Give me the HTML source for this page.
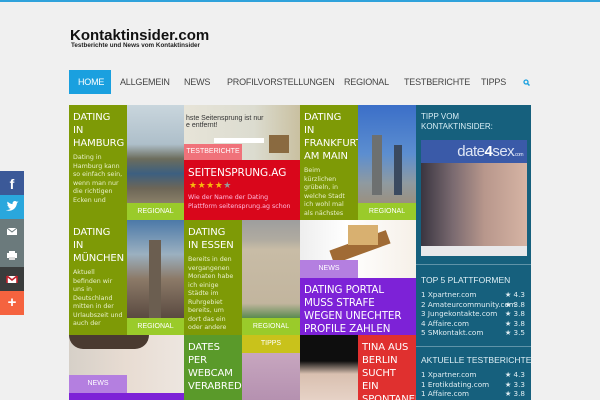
<!DOCTYPE html>
<html><head><meta charset="utf-8"><style>
*{margin:0;padding:0;box-sizing:border-box}
body{width:600px;height:400px;overflow:hidden;background:#f0f0f0;font-family:"DejaVu Sans","Liberation Sans",sans-serif;position:relative}
.a{position:absolute;overflow:hidden}
.t{color:#fff;font-size:10px;line-height:13px;padding:6px 4px 0 4px;letter-spacing:-.1px}
.d{color:#e8f0c8;font-size:6.3px;line-height:8.5px;padding:4px 4px 0 4px}
.lab{color:#fff;font-size:7px;text-align:center;line-height:17px;font-family:"Liberation Sans",sans-serif}
.nav{position:absolute;top:70px;font-family:"Liberation Sans",sans-serif;font-size:9px;color:#444;line-height:24px;letter-spacing:-.2px}
.sb{color:#e0edf2;font-size:7.2px;line-height:9.5px;font-family:"DejaVu Sans",sans-serif}
.sb span{position:absolute;right:6px}
</style></head><body>
<div class="a" style="left:0;top:0;width:600px;height:2px;background:#2fa2db"></div>
<div class="a" style="left:70px;top:27px;font:bold 15px 'Liberation Sans',sans-serif;color:#111">Kontaktinsider.com</div>
<div class="a" style="left:71px;top:42px;font:bold 6.3px 'Liberation Sans',sans-serif;color:#222">Testberichte und News vom Kontaktinsider</div>
<div class="a" style="left:69px;top:70px;width:42px;height:24px;background:#1aa0df"></div>
<div class="nav" style="left:78px;color:#fff">HOME</div>
<div class="nav" style="left:120px">ALLGEMEIN</div>
<div class="nav" style="left:184px">NEWS</div>
<div class="nav" style="left:227px">PROFILVORSTELLUNGEN</div>
<div class="nav" style="left:344px">REGIONAL</div>
<div class="nav" style="left:404px">TESTBERICHTE</div>
<div class="nav" style="left:481px">TIPPS</div>
<svg class="a" style="left:523px;top:79px" width="7" height="7"><circle cx="3" cy="3" r="2" fill="none" stroke="#1aa0df" stroke-width="1.3"/><path d="M4.5 4.5L6.5 6.5" stroke="#1aa0df" stroke-width="1.5"/></svg>

<!-- social -->
<div class="a" style="left:0;top:171px;width:24px;height:24px;background:#3b5998;color:#fff;font:bold 14px 'Liberation Sans';text-align:center;line-height:26px">f</div>
<div class="a" style="left:0;top:195px;width:24px;height:24px;background:#2aa7dd"><svg width="24" height="24"><path d="M6 15c4 2 10 0 11-7l1.5-1.5-1.8.3c-1-1-2.5-1-3.5 0-.6.6-.8 1.5-.6 2.3-2-.1-3.5-1-5-2.5-.7 1.3-.2 2.7.8 3.4l-1-.2c0 1.2.8 2 2 2.3h-1c.3 1 1.3 1.6 2.3 1.6-1 .9-2.6 1.3-4.7 1.3z" fill="#fff"/></svg></div>
<div class="a" style="left:0;top:219px;width:24px;height:24px;background:#6b7a7c"><svg width="24" height="24"><rect x="7" y="9" width="10" height="7" fill="#fff"/><path d="M7 9l5 4 5-4" fill="none" stroke="#6b7a7c"/></svg></div>
<div class="a" style="left:0;top:243px;width:24px;height:24px;background:#6b7a7c"><svg width="24" height="24"><rect x="7" y="10" width="10" height="5" fill="#fff"/><rect x="9" y="8" width="6" height="2" fill="#fff"/><rect x="9" y="14" width="6" height="3" fill="#ddd"/></svg></div>
<div class="a" style="left:0;top:267px;width:24px;height:24px;background:#3a3c3c"><svg width="24" height="24"><rect x="7" y="9" width="10" height="7" fill="#fff"/><path d="M7 9v7M17 9v7M7 9l5 4 5-4" fill="none" stroke="#c3202b" stroke-width="1.6"/></svg></div>
<div class="a" style="left:0;top:291px;width:24px;height:24px;background:#f5633f;color:#fff;font:bold 15px 'Liberation Sans';text-align:center;line-height:24px">+</div>

<!-- row1 -->
<div class="a" style="left:69px;top:105px;width:58px;height:115px;background:#7e9a06"><div class="t">DATING IN HAMBURG</div><div class="d">Dating in Hamburg kann so einfach sein, wenn man nur die richtigen Ecken und</div></div>
<div class="a" style="left:127px;top:105px;width:57px;height:98px;background:linear-gradient(#c9d6dd 0%,#aebfca 40%,#6c6d5c 55%,#3c5f80 70%,#6d6657 85%,#8a8068 100%)"></div>
<div class="a lab" style="left:127px;top:203px;width:57px;height:17px;background:#9acb2a">REGIONAL</div>

<div class="a" style="left:184px;top:105px;width:116px;height:55px;background:linear-gradient(90deg,#e7e4d8,#dcdcd0 60%,#c9c0a0)"><div style="position:absolute;left:2px;top:10px;font:7px 'Liberation Sans';color:#333">hste Seitensprung ist nur<br>e entfernt!</div><div style="position:absolute;left:30px;top:33px;width:50px;height:5px;background:#fff"></div><div style="position:absolute;left:85px;top:30px;width:20px;height:18px;background:#8a6a40"></div></div>
<div class="a lab" style="left:184px;top:144px;width:58px;height:16px;line-height:16px;background:#f0727a">TESTBERICHTE</div>
<div class="a" style="left:184px;top:160px;width:116px;height:60px;background:#d9061b"><div class="t" style="font-size:10.5px;padding-top:7px">SEITENSPRUNG.AG</div><div style="position:absolute;left:5px;top:21px;font-size:9px;color:#f8b80e;letter-spacing:.5px">★★★★<span style="color:#999">★</span></div><div class="d" style="position:absolute;top:30px;color:#fbd">Wie der Name der Dating Plattform seitensprung.ag schon</div></div>

<div class="a" style="left:300px;top:105px;width:58px;height:115px;background:#7e9a06"><div class="t">DATING IN FRANKFURT AM MAIN</div><div class="d">Beim kürzlichen grübeln, in welche Stadt ich wohl mal als nächstes</div></div>
<div class="a" style="left:358px;top:105px;width:58px;height:98px;background:linear-gradient(#3b6fc8,#5c8ed0 50%,#8f9aa0 80%,#9a9080)"><div style="position:absolute;left:14px;top:30px;width:10px;height:60px;background:#6d7070"></div><div style="position:absolute;left:36px;top:40px;width:8px;height:50px;background:#3a4a60"></div></div>
<div class="a lab" style="left:358px;top:203px;width:58px;height:17px;background:#9acb2a">REGIONAL</div>

<!-- row2 -->
<div class="a" style="left:69px;top:220px;width:58px;height:115px;background:#7e9a06"><div class="t">DATING IN MÜNCHEN</div><div class="d">Aktuell befinden wir uns in Deutschland mitten in der Urlaubszeit und auch der</div></div>
<div class="a" style="left:127px;top:220px;width:57px;height:98px;background:linear-gradient(#4c79a8,#9bb0c0 35%,#8c7a68 60%,#5a4a40)"><div style="position:absolute;left:22px;top:20px;width:12px;height:78px;background:#6b5e50"></div></div>
<div class="a lab" style="left:127px;top:318px;width:57px;height:17px;background:#9acb2a">REGIONAL</div>
<div class="a" style="left:184px;top:220px;width:58px;height:115px;background:#7e9a06"><div class="t">DATING IN ESSEN</div><div class="d">Bereits in den vergangenen Monaten habe ich einige Städte im Ruhrgebiet bereits, um dort das ein oder andere</div></div>
<div class="a" style="left:242px;top:220px;width:58px;height:98px;background:linear-gradient(#9e9e9e,#b0aba0 20%,#c8bca6 30%,#c2b59e 85%,#5a8a50)"></div>
<div class="a lab" style="left:242px;top:318px;width:58px;height:17px;background:#9acb2a">REGIONAL</div>
<div class="a" style="left:300px;top:220px;width:116px;height:58px;background:linear-gradient(90deg,#eee,#fff 40%,#f6f0e8)"><div style="position:absolute;left:30px;top:20px;width:60px;height:14px;background:#a06b35;transform:rotate(-20deg)"></div><div style="position:absolute;left:48px;top:5px;width:30px;height:20px;background:#d8b070"></div></div>
<div class="a lab" style="left:300px;top:260px;width:58px;height:18px;background:#b47fe0">NEWS</div>
<div class="a" style="left:300px;top:278px;width:116px;height:57px;background:#7d22d7"><div class="t" style="font-size:10.3px;line-height:13px;padding-top:6px">DATING PORTAL MUSS STRAFE WEGEN UNECHTER PROFILE ZAHLEN</div></div>

<!-- row3 -->
<div class="a" style="left:69px;top:335px;width:115px;height:65px;background:linear-gradient(90deg,#d6d0c8,#e8dcd2 50%,#ede6e0)"><div style="position:absolute;left:0;top:0;width:80px;height:14px;background:#4a3a30;border-radius:0 0 40px 40px"></div></div>
<div class="a lab" style="left:69px;top:375px;width:58px;height:18px;background:#b47fe0">NEWS</div>
<div class="a" style="left:69px;top:393px;width:115px;height:7px;background:#7d22d7"></div>
<div class="a" style="left:184px;top:335px;width:58px;height:65px;background:#5a9a2a"><div class="t">DATES PER WEBCAM VERABREDEN</div></div>
<div class="a" style="left:242px;top:353px;width:58px;height:47px;background:linear-gradient(#c7a6bf,#b591b0)"></div>
<div class="a lab" style="left:242px;top:335px;width:58px;height:18px;background:#c9c21b">TIPPS</div>
<div class="a" style="left:300px;top:335px;width:58px;height:65px;background:linear-gradient(#0e0e0e 40%,#d9c0b0 60%,#e6d2c6)"></div>
<div class="a" style="left:358px;top:335px;width:58px;height:65px;background:#e0302f"><div class="t">TINA AUS BERLIN SUCHT EIN SPONTANEN</div></div>

<!-- sidebar -->
<div class="a" style="left:416px;top:105px;width:115px;height:295px;background:#16607d"></div>
<div class="a" style="left:421px;top:112px;font:8px 'Liberation Sans',sans-serif;color:#d8eef5;line-height:10px">TIPP VOM<br>KONTAKTINSIDER:</div>
<div class="a" style="left:421px;top:140px;width:106px;height:23px;background:#3a5aa8;color:#dfe6f5;font:15px 'Liberation Sans',sans-serif;text-align:right;padding-right:4px;line-height:23px;letter-spacing:-.5px">date<b style="color:#fff">4</b>sex<span style="font-size:5px">.com</span></div>
<div class="a" style="left:421px;top:163px;width:106px;height:83px;background:linear-gradient(90deg,#3a3540,#7a6a70 30%,#b8978c 60%,#d6b4a4)"></div>
<div class="a" style="left:421px;top:246px;width:106px;height:10px;background:#e8e8ea"></div>
<div class="a" style="left:416px;top:264px;width:115px;height:1px;background:#5f93a8"></div>
<div class="a" style="left:421px;top:275px;font:8.5px 'Liberation Sans',sans-serif;color:#e0f0f6">TOP 5 PLATTFORMEN</div>
<div class="a sb" style="left:421px;top:290px;width:110px"><div style="position:relative">1 Xpartner.com<span>★ 4.3</span></div><div style="position:relative">2 Amateurcommunity.com<span>★ 3.8</span></div><div style="position:relative">3 Jungekontakte.com<span>★ 3.8</span></div><div style="position:relative">4 Affaire.com<span>★ 3.8</span></div><div style="position:relative">5 SMkontakt.com<span>★ 3.5</span></div></div>
<div class="a" style="left:416px;top:346px;width:115px;height:1px;background:#5f93a8"></div>
<div class="a" style="left:421px;top:355px;font:8.5px 'Liberation Sans',sans-serif;color:#e0f0f6">AKTUELLE TESTBERICHTE</div>
<div class="a sb" style="left:421px;top:370px;width:110px"><div style="position:relative">1 Xpartner.com<span>★ 4.3</span></div><div style="position:relative">1 Erotikdating.com<span>★ 3.3</span></div><div style="position:relative">1 Affaire.com<span>★ 3.8</span></div></div>
</body></html>
